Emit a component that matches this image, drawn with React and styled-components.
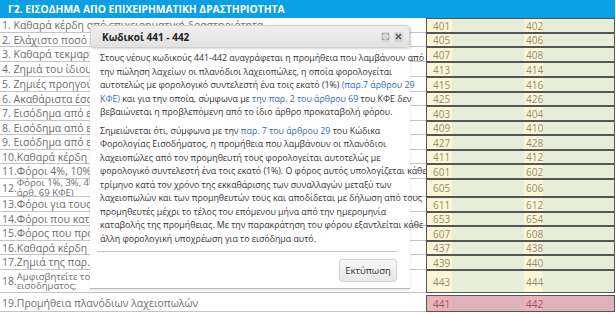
import React from 'react'
import styled, { createGlobalStyle } from 'styled-components'

const GlobalStyle = createGlobalStyle`
  body {
    margin: 0;
    background: #ffffff;
    font-family: 'Open Sans', 'DejaVu Sans', sans-serif;
  }
`

const rows = [
	{ n: '1. ', label: 'Καθαρά κέρδη από επιχειρηματική δραστηριότητα', a: '401', b: '402', h: 15 },
	{ n: '2. ', label: 'Ελάχιστο ποσό καθαρού κέρδους', a: '405', b: '406', h: 14 },
	{ n: '3. ', label: 'Καθαρά τεκμαρτά κέρδη', a: '407', b: '408', h: 15 },
	{ n: '4. ', label: 'Ζημιά του ίδιου έτους', a: '413', b: '414', h: 15 },
	{ n: '5. ', label: 'Ζημιές προηγούμενων ετών', a: '415', b: '416', h: 15 },
	{ n: '6. ', label: 'Ακαθάριστα έσοδα', a: '425', b: '426', h: 14 },
	{ n: '7. ', label: 'Εισόδημα από εκμίσθωση', a: '403', b: '404', h: 15 },
	{ n: '8. ', label: 'Εισόδημα από ενοίκια', a: '409', b: '410', h: 14 },
	{ n: '9. ', label: 'Εισόδημα από επιδοτήσεις', a: '427', b: '428', h: 15 },
	{ n: '10.', label: 'Καθαρά κέρδη από μεταβίβαση', a: '411', b: '412', h: 14 },
	{ n: '11.', label: 'Φόροι 4%, 10% και 20%', a: '601', b: '602', h: 15 },
	{ n: '12.', label: 'Φόροι 1%, 3%, 4%', sub: 'άρθ. 69 ΚΦΕ)', a: '605', b: '606', h: 18 },
	{ n: '13.', label: 'Φόροι για τους ομόρρυθμους', a: '611', b: '612', h: 15 },
	{ n: '14.', label: 'Φόροι που καταβλήθηκαν', a: '653', b: '654', h: 14 },
	{ n: '15.', label: 'Φόρος που προκαταβλήθηκε', a: '607', b: '608', h: 15 },
	{ n: '16.', label: 'Καθαρά κέρδη της παρ. 4', a: '437', b: '438', h: 14 },
	{ n: '17.', label: 'Ζημιά της παρ. 2', a: '439', b: '440', h: 15 },
	{ n: '18.', label: 'Αμφισβητείτε το ύψος', sub: 'εισοδήματος;', a: '443', b: '444', h: 23 },
	{ n: '19.', label: 'Προμήθεια πλανόδιων λαχειοπωλών', a: '441', b: '442', h: 17, red: true, gap: 2 }
]

function ExpandIcon() {
	return (
		<svg width="7" height="7" viewBox="0 0 7 7" fill="none" stroke="#a0a0a0" strokeWidth="1">
			<path d="M0.5 2.5V0.5H2.5M4.5 0.5H6.5V2.5M6.5 4.5V6.5H4.5M2.5 6.5H0.5V4.5" />
		</svg>
	)
}

function CloseIcon() {
	return (
		<svg width="7" height="7" viewBox="0 0 7 7" fill="none" stroke="#5e5e5e" strokeWidth="1.7">
			<path d="M1 1L6 6M6 1L1 6" />
		</svg>
	)
}

export default function App() {
	return (
		<Page>
			<GlobalStyle />
			<Header>Γ2. ΕΙΣΟΔΗΜΑ ΑΠΟ ΕΠΙΧΕΙΡΗΜΑΤΙΚΗ ΔΡΑΣΤΗΡΙΟΤΗΤΑ</Header>
			<Form>
				{rows.map((r) =>
					<Row key={r.a} $h={r.h} $gap={r.gap}>
						<Label>
							<Num>{r.n}</Num>
							{r.sub ? (
								<TwoLine>
									<span>{r.label}</span>
									<span>{r.sub}</span>
								</TwoLine>
							) : (
								<span>{r.label}</span>
							)}
						</Label>
						<Codes $red={r.red}>
							<Field $w={97}>
								<Code $red={r.red} $w={25} $pad={6}>{r.a}</Code>
							</Field>
							<Field>
								<Code $red={r.red} $w={19} $pad={2}>{r.b}</Code>
							</Field>
						</Codes>
					</Row>
				)}
			</Form>

			<Dialog>
				<TitleBar>
					<Title>Κωδικοί 441 - 442</Title>
					<TitleButtons>
						<TitleButton><ExpandIcon /></TitleButton>
						<TitleButton><CloseIcon /></TitleButton>
					</TitleButtons>
				</TitleBar>
				<Body>
					<Para>
						Στους νέους κωδικούς 441-442 αναγράφεται η προμήθεια που λαμβάνουν από<br />
						την πώληση λαχείων οι πλανόδιοι λαχειοπώλες, η οποία φορολογείται<br />
						αυτοτελώς με φορολογικό συντελεστή ένα τοις εκατό (1%) <Link>(παρ.7 άρθρου 29</Link><br />
						<Link>ΚΦΕ)</Link> και για την οποία, σύμφωνα με <Link>την παρ. 2 του άρθρου 69</Link> του ΚΦΕ δεν<br />
						βεβαιώνεται η προβλεπόμενη από το ίδιο άρθρο προκαταβολή φόρου.
					</Para>
					<Para>
						Σημειώνεται ότι, σύμφωνα με την <Link>παρ. 7 του άρθρου 29</Link> του Κώδικα<br />
						Φορολογίας Εισοδήματος, η προμήθεια που λαμβάνουν οι πλανόδιοι<br />
						λαχειοπώλες από τον προμηθευτή τους φορολογείται αυτοτελώς με<br />
						φορολογικό συντελεστή ένα τοις εκατό (1%). Ο φόρος αυτός υπολογίζεται κάθε<br />
						τρίμηνο κατά τον χρόνο της εκκαθάρισης των συναλλαγών μεταξύ των<br />
						λαχειοπωλών και των προμηθευτών τους και αποδίδεται με δήλωση από τους<br />
						προμηθευτές μέχρι το τέλος του επόμενου μήνα από την ημερομηνία<br />
						καταβολής της προμήθειας. Με την παρακράτηση του φόρου εξαντλείται κάθε<br />
						άλλη φορολογική υποχρέωση για το εισόδημα αυτό.
					</Para>
				</Body>
				<Footer>
					<PrintButton>Εκτύπωση</PrintButton>
				</Footer>
			</Dialog>
		</Page>
	)
}

const Page = styled.div`
  position: relative;
  width: 615px;
  height: 314px;
  overflow: hidden;
`

const Header = styled.div`
  height: 18px;
  line-height: 18px;
  padding-left: 8px;
  background: #0aa0e3;
  color: #ffffff;
  font-size: 10.3px;
  font-weight: 700;
  white-space: nowrap;
`

const Form = styled.div`
  display: flex;
  flex-direction: column;
`

const Row = styled.div`
  display: flex;
  height: ${(p) => p.$h}px;
  margin-top: ${(p) => p.$gap || 0}px;
`

const Label = styled.div`
  flex: 1;
  min-width: 0;
  display: flex;
  align-items: center;
  box-sizing: border-box;
  padding-left: 2px;
  border-bottom: 1px solid #c4c4c4;
  font-size: 10.5px;
  color: #6e6e6e;
  white-space: nowrap;
`

const Num = styled.span`
  flex: none;
  white-space: pre;
`

const TwoLine = styled.span`
  display: flex;
  flex-direction: column;
  font-size: 9.5px;
  line-height: 9.5px;
`

const Codes = styled.div`
  flex: none;
  width: 189px;
  display: flex;
  box-sizing: border-box;
  border: 1px solid #555555;
  background: ${(p) => (p.$red ? '#dcb2bd' : '#e6eed9')};
`

const Field = styled.div`
  display: flex;
  width: ${(p) => (p.$w ? p.$w + 'px' : 'auto')};
  flex: ${(p) => (p.$w ? 'none' : '1')};
`

const Code = styled.span`
  display: flex;
  align-items: center;
  box-sizing: border-box;
  width: ${(p) => p.$w}px;
  padding-left: ${(p) => p.$pad}px;
  background: ${(p) => (p.$red ? '#eeb1ba' : '#fdf6d6')};
  font-size: 10px;
  color: ${(p) => (p.$red ? '#8a5c66' : '#8f8a7a')};
`

const Dialog = styled.div`
  position: absolute;
  left: 90px;
  top: 25px;
  width: 320px;
  height: 264px;
  box-sizing: border-box;
  display: flex;
  flex-direction: column;
  background: #ffffff;
  border-bottom: 1px solid #b8b8b8;
  box-shadow: 0 1px 3px rgba(0, 0, 0, 0.1);
`

const TitleBar = styled.div`
  height: 23px;
  flex: none;
  display: flex;
  align-items: center;
  justify-content: space-between;
  box-sizing: border-box;
  padding: 0 6px 0 11px;
  border: 1px solid #cfcfcf;
  border-radius: 4px;
  background: linear-gradient(#efefef, #e2e2e2);
  box-shadow: 1px 1px 2px rgba(0, 0, 0, 0.15);
`

const Title = styled.div`
  font-size: 10px;
  font-weight: 700;
  color: #222222;
`

const TitleButtons = styled.div`
  display: flex;
  gap: 4px;
`

const TitleButton = styled.div`
  width: 9px;
  height: 10px;
  display: flex;
  align-items: center;
  justify-content: center;
  border-radius: 2px;
  background: #d6d6d6;
`

const Body = styled.div`
  flex: 1;
  padding: 4px 0 0 10px;
`

const Para = styled.p`
  margin: 0 0 5px 0;
  font-size: 8.8px;
  line-height: 13.5px;
  color: #333333;
  white-space: nowrap;
`

const Link = styled.span`
  color: #2b6cb5;
`

const Footer = styled.div`
  flex: none;
  display: flex;
  justify-content: flex-end;
  margin: 0 13px 8px 7px;
  padding-top: 7px;
  border-top: 1px solid #c4c4c4;
`

const PrintButton = styled.div`
  width: 58px;
  height: 23px;
  display: flex;
  align-items: center;
  justify-content: center;
  box-sizing: border-box;
  border: 1px solid #d2d2d2;
  border-radius: 3px;
  background: linear-gradient(#f7f7f7, #e8e8e8);
  font-size: 9.5px;
  color: #333333;
`
